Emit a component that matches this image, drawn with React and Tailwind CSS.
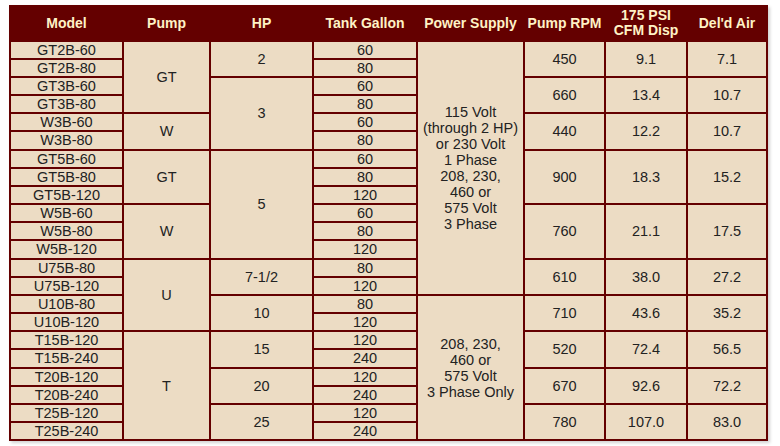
import React from 'react';

// widths measured per column (cell content box)
const headers = [
    { label: 'Model', w: 'w-[111px]' },
    { label: 'Pump', w: 'w-[85px]' },
    { label: 'HP', w: 'w-[101px]' },
    { label: 'Tank Gallon', w: 'w-[102px]' },
    { label: 'Power Supply', w: 'w-[105px]' },
    { label: 'Pump RPM', w: 'w-[79px]' },
    { label: ['175 PSI', 'CFM Disp'], w: 'w-[80px]' },
    { label: "Del'd Air", w: 'w-[78px]' },
];

const power1 = ['115 Volt', '(through 2 HP)', 'or 230 Volt', '1 Phase', '208, 230,', '460 or', '575 Volt', '3 Phase'];
const power2 = ['208, 230,', '460 or', '575 Volt', '3 Phase Only'];

// each row: list of [text, rowSpan]
const rows = [
    [['GT2B-60'], ['GT', 4], ['2', 2], ['60'], [power1, 14], ['450', 2], ['9.1', 2], ['7.1', 2]],
    [['GT2B-80'], ['80']],
    [['GT3B-60'], ['3', 4], ['60'], ['660', 2], ['13.4', 2], ['10.7', 2]],
    [['GT3B-80'], ['80']],
    [['W3B-60'], ['W', 2], ['60'], ['440', 2], ['12.2', 2], ['10.7', 2]],
    [['W3B-80'], ['80']],
    [['GT5B-60'], ['GT', 3], ['5', 6], ['60'], ['900', 3], ['18.3', 3], ['15.2', 3]],
    [['GT5B-80'], ['80']],
    [['GT5B-120'], ['120']],
    [['W5B-60'], ['W', 3], ['60'], ['760', 3], ['21.1', 3], ['17.5', 3]],
    [['W5B-80'], ['80']],
    [['W5B-120'], ['120']],
    [['U75B-80'], ['U', 4], ['7-1/2', 2], ['80'], ['610', 2], ['38.0', 2], ['27.2', 2]],
    [['U75B-120'], ['120']],
    [['U10B-80'], ['10', 2], ['80'], [power2, 8], ['710', 2], ['43.6', 2], ['35.2', 2]],
    [['U10B-120'], ['120']],
    [['T15B-120'], ['T', 6], ['15', 2], ['120'], ['520', 2], ['72.4', 2], ['56.5', 2]],
    [['T15B-240'], ['240']],
    [['T20B-120'], ['20', 2], ['120'], ['670', 2], ['92.6', 2], ['72.2', 2]],
    [['T20B-240'], ['240']],
    [['T25B-120'], ['25', 2], ['120'], ['780', 2], ['107.0', 2], ['83.0', 2]],
    [['T25B-240'], ['240']],
];

const Cell = ({ text, span }) => (
    <td
        rowSpan={span || 1}
        className="bg-[#ecdcc4] p-0 text-center align-middle text-[14.5px] leading-[16.15px] text-[#222]"
    >
        {Array.isArray(text) ? text.map((t) => <div key={t} className="leading-[16px]">{t}</div>) : text}
    </td>
);

export default function App() {
    return (
        <div className="min-h-[446px] bg-white pt-[5px] pl-[9px] font-['Liberation_Sans',Arial,sans-serif]">
            <table className="table-fixed w-[759px] border-separate border-spacing-[2px] bg-[#640000] shadow-[2px_2px_3px_rgba(0,0,0,0.18)]">
                <thead>
                    <tr>
                        {headers.map((h, i) => (
                            <th
                                key={i}
                                className={`${h.w} h-[32.7px] p-0 text-center align-middle text-[14px] font-bold leading-[15px] text-[#fff2c6]`}
                            >
                                {Array.isArray(h.label) ? h.label.map((l) => <div key={l}>{l}</div>) : h.label}
                            </th>
                        ))}
                    </tr>
                </thead>
                <tbody>
                    {rows.map((r, i) => (
                        <tr key={i}>
                            {r.map(([text, span], j) => (
                                <Cell key={j} text={text} span={span} />
                            ))}
                        </tr>
                    ))}
                </tbody>
            </table>
        </div>
    );
}
